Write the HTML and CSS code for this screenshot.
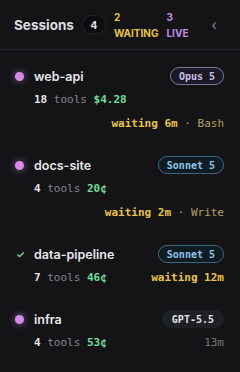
FILE: index.html
```html
<!DOCTYPE html>
<html lang="en">
<head>
  <meta charset="UTF-8">
  <title>Sessions</title>
  <link rel="stylesheet" href="styles.css">
</head>
<body>
  <div class="panel">
    <!-- Cabeçalho -->
    <div class="panel-header">
      <h2>Sessions</h2>
      <span class="count">4</span>
      <div class="stat waiting"><span>2</span><span>WAITING</span></div>
      <div class="stat live"><span>3</span><span>LIVE</span></div>
      <span class="collapse">&#8249;</span>
    </div>

    <!-- Lista de sessões -->
    <div class="session-list">
      <div class="session">
        <div class="line">
          <span class="status dot"></span>
          <span class="name">web-api</span>
          <span class="model opus">Opus 5</span>
        </div>
        <div class="line meta">
          <span><b>18</b> tools <b class="cost">$4.28</b></span>
        </div>
        <div class="line meta right">
          <span class="wait">waiting 6m</span><span class="tool">&nbsp;&middot; Bash</span>
        </div>
      </div>

      <div class="session">
        <div class="line">
          <span class="status dot"></span>
          <span class="name">docs-site</span>
          <span class="model sonnet">Sonnet 5</span>
        </div>
        <div class="line meta">
          <span><b>4</b> tools <b class="cost">20&cent;</b></span>
        </div>
        <div class="line meta right">
          <span class="wait">waiting 2m</span><span class="tool">&nbsp;&middot; Write</span>
        </div>
      </div>

      <div class="session">
        <div class="line">
          <span class="status check">&#10003;</span>
          <span class="name">data-pipeline</span>
          <span class="model sonnet">Sonnet 5</span>
        </div>
        <div class="line meta">
          <span><b>7</b> tools <b class="cost">46&cent;</b></span>
          <span class="wait">waiting 12m</span>
        </div>
      </div>

      <div class="session">
        <div class="line">
          <span class="status dot"></span>
          <span class="name">infra</span>
          <span class="model gpt">GPT-5.5</span>
        </div>
        <div class="line meta">
          <span><b>4</b> tools <b class="cost">53&cent;</b></span>
          <span class="ago">13m</span>
        </div>
      </div>
    </div>
  </div>
</body>
</html>
```
FILE: styles.css
```css
body {
  margin: 0;
  background-color: #141417;
  font-family: Inter, "Noto Sans", sans-serif;
  color: #e4e4e8;
}
.panel {
  width: 240px;
  height: 372px;
}
.panel-header {
  display: flex;
  align-items: center;
  height: 50px;
  padding: 0 14px;
  box-sizing: border-box;
  border-bottom: 1px solid #25252a;
}
.panel-header h2 {
  margin: 0;
  font-size: 13.5px;
  font-weight: 700;
  color: #dcdce2;
}
.count {
  margin-left: 8px;
  width: 24px;
  height: 19px;
  border-radius: 10px;
  background-color: #0d0d10;
  border: 1px solid #222227;
  box-sizing: border-box;
  font-size: 10px;
  font-weight: 700;
  display: flex;
  align-items: center;
  justify-content: center;
}
.stat {
  display: flex;
  flex-direction: column;
  font-size: 10px;
  font-weight: 700;
  line-height: 16px;
  margin-left: 8px;
}
.stat.waiting { color: #e8c24a; }
.stat.live { color: #c28be6; }
.collapse {
  margin-left: auto;
  margin-right: 9px;
  color: #8a8a92;
  font-size: 14px;
}
.session-list {
  padding-top: 4px;
}
.session {
  padding: 12px 16px 12px 14px;
}
.line {
  display: flex;
  align-items: center;
  height: 20px;
}
.status {
  width: 20px;
  display: flex;
  align-items: center;
  justify-content: flex-start;
}
.status.dot::before {
  content: "";
  width: 9px;
  height: 9px;
  border-radius: 50%;
  margin-left: 1px;
  background-color: #d48be6;
  box-shadow: 0 0 7px rgba(212, 139, 230, 0.6);
}
.status.check {
  color: #6fd69a;
  font-size: 10px;
  font-weight: 700;
  padding-left: 2px;
  box-sizing: border-box;
}
.name {
  font-size: 12.5px;
  font-weight: 600;
  color: #e6e6ea;
}
.model {
  margin-left: auto;
  height: 18px;
  padding: 0 8px;
  border-radius: 9px;
  box-sizing: border-box;
  font-family: "DejaVu Sans Mono", monospace;
  font-size: 10px;
  font-weight: 700;
  display: flex;
  align-items: center;
}
.model.opus {
  background-color: #1c1b25;
  border: 1px solid #7d7598;
  color: #c9c2e6;
}
.model.sonnet {
  background-color: #111b22;
  border: 1px solid #3b6680;
  color: #8ec6ea;
}
.model.gpt {
  padding: 0 10px;
  background-color: #1f2025;
  color: #e2e2e6;
}
.meta {
  height: 16px;
  margin-top: 5px;
  padding-left: 20px;
  justify-content: space-between;
  font-family: "DejaVu Sans Mono", monospace;
  font-size: 11px;
  color: #85858c;
}
.meta b {
  color: #e6e6ea;
}
.meta b.cost {
  color: #6fdc9c;
}
.meta.right {
  margin-top: 8px;
  justify-content: flex-end;
}
.wait {
  color: #e6c14c;
  font-weight: 700;
}
.tool {
  color: #b5a062;
}
.ago {
  color: #75757c;
}
```
